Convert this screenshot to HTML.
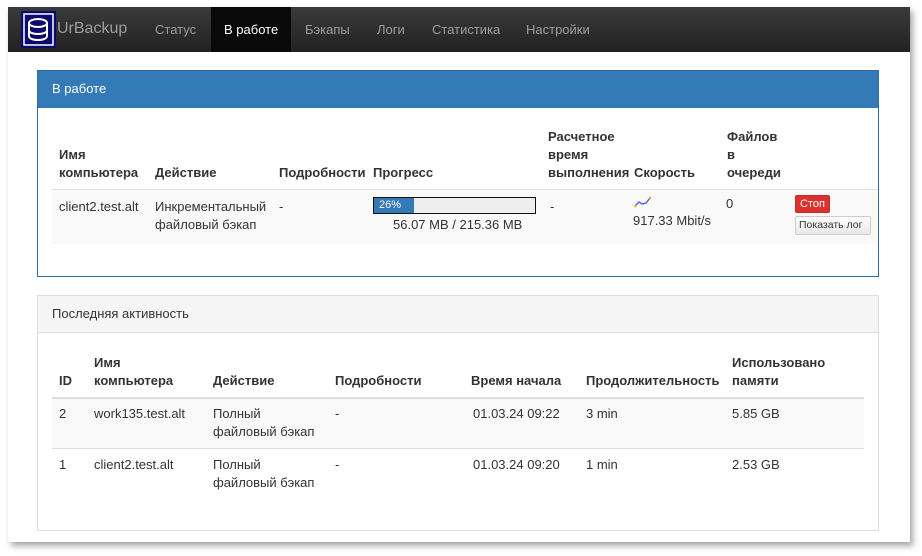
<!DOCTYPE html>
<html><head><meta charset="utf-8"><style>
*{margin:0;padding:0;box-sizing:border-box}
body{width:922px;height:556px;background:#fff;font-family:"Liberation Sans",Arial,sans-serif;font-size:13px;color:#333;position:relative;overflow:hidden}
.frame{position:absolute;left:8px;top:7px;width:902px;height:535px;background:#fff;box-shadow:3px 4px 6px rgba(0,0,0,.35)}
.nav{position:absolute;left:8px;top:7px;width:902px;height:45px;background:linear-gradient(#3a3a3a,#222)}
.nav span{position:absolute;top:15px;color:#9d9d9d;font-size:13px}
.act{position:absolute;left:203px;top:0;width:80px;height:45px;background:#090909}
.a{position:absolute;white-space:nowrap;line-height:18px}
.b{font-weight:bold}
.p1{position:absolute;left:37px;top:70px;width:842px;height:207px;border:1px solid #2e6da4}
.p1h{position:absolute;left:0;top:0;width:840px;height:37px;background:#337ab7;color:#fff;padding:10px 14px}
.p2{position:absolute;left:37px;top:295px;width:842px;height:236px;border:1px solid #ddd}
.p2h{position:absolute;left:0;top:0;width:840px;height:37px;background:#f5f5f5;border-bottom:1px solid #ddd;padding:10px 14px}
.line{position:absolute;height:1px;background:#ddd}
.stripe{position:absolute;background:#f9f9f9}
</style></head><body>
<div class="frame"></div>
<div class="nav">
 <svg style="position:absolute;left:13px;top:4px" width="35" height="37" viewBox="0 0 35 37"><rect width="35" height="37" fill="#0a0a70"/><rect x="3" y="3" width="29" height="31" fill="none" stroke="#fff" stroke-width="1.5"/><ellipse cx="17" cy="12" rx="9" ry="4" fill="none" stroke="#fff" stroke-width="2"/><path d="M8 12v13c0 2.5 4 4 9 4s9-1.5 9-4V12M8 19c0 2.5 4 4 9 4s9-1.5 9-4" fill="none" stroke="#fff" stroke-width="2"/></svg>
 <span style="left:49px;top:13px;font-size:16px;color:#9d9d9d">UrBackup</span>
 <div class="act"></div>
 <span style="left:147px">Статус</span>
 <span style="left:216px;color:#fff">В работе</span>
 <span style="left:297px">Бэкапы</span>
 <span style="left:369px">Логи</span>
 <span style="left:424px">Статистика</span>
 <span style="left:518px">Настройки</span>
</div>
<div class="p1"><div class="p1h">В работе</div></div>
<div class="stripe" style="left:52px;top:190px;width:825px;height:54px"></div>
<div class="line" style="left:52px;top:189px;width:825px;height:1px;background:#ddd"></div>
<div class="a b" style="left:59px;top:146px">Имя<br>компьютера</div>
<div class="a b" style="left:155px;top:164px">Действие</div>
<div class="a b" style="left:279px;top:164px">Подробности</div>
<div class="a b" style="left:373px;top:164px">Прогресс</div>
<div class="a b" style="left:548px;top:128px">Расчетное<br>время<br>выполнения</div>
<div class="a b" style="left:634px;top:164px">Скорость</div>
<div class="a b" style="left:727px;top:128px">Файлов<br>в<br>очереди</div>
<div class="a" style="left:59px;top:198px">client2.test.alt</div>
<div class="a" style="left:155px;top:198px">Инкрементальный<br>файловый бэкап</div>
<div class="a" style="left:279px;top:198px">-</div>
<div style="position:absolute;left:373px;top:197px;width:163px;height:17px;border:1px solid #111;background:#eee"><div style="width:40px;height:15px;background:#337ab7;color:#fff;font-size:11px;padding:1px 5px">26%</div></div>
<div class="a" style="left:393px;top:216px">56.07 MB / 215.36 MB</div>
<div class="a" style="left:550px;top:198px">-</div>
<svg style="position:absolute;left:634px;top:196px" width="18" height="12"><path d="M1 10 L5 6 L8 8 L12 7 L16 2" fill="none" stroke="#55e" stroke-width="1.3"/><circle cx="1.5" cy="10" r="1.2" fill="#f90"/><circle cx="16" cy="2" r="1.2" fill="#f90"/></svg>
<div class="a" style="left:633px;top:212px">917.33 Mbit/s</div>
<div class="a" style="left:726px;top:195px">0</div>
<div style="position:absolute;left:795px;top:195px;width:35px;height:18px;background:#d9322f;border:1px solid #c12e2a;color:#fff;font-size:11px;line-height:14px;padding:1px 4px;border-radius:2px">Стоп</div>
<div style="position:absolute;left:795px;top:216px;width:76px;height:19px;background:linear-gradient(#fff,#e8e8e8);border:1px solid #ccc;font-size:10.5px;line-height:15px;padding:1px 3px;border-radius:2px;white-space:nowrap;overflow:hidden">Показать лог</div>

<div class="p2"><div class="p2h">Последняя активность</div></div>
<div class="stripe" style="left:52px;top:398px;width:812px;height:50px"></div>
<div class="line" style="left:52px;top:397px;width:812px;height:2px"></div>
<div class="line" style="left:52px;top:448px;width:812px"></div>
<div class="a b" style="left:59px;top:372px">ID</div>
<div class="a b" style="left:94px;top:354px">Имя<br>компьютера</div>
<div class="a b" style="left:213px;top:372px">Действие</div>
<div class="a b" style="left:335px;top:372px">Подробности</div>
<div class="a b" style="left:471px;top:372px">Время начала</div>
<div class="a b" style="left:586px;top:372px">Продолжительность</div>
<div class="a b" style="left:732px;top:354px">Использовано<br>памяти</div>
<div class="a" style="left:59px;top:405px">2</div>
<div class="a" style="left:94px;top:405px">work135.test.alt</div>
<div class="a" style="left:213px;top:405px">Полный<br>файловый бэкап</div>
<div class="a" style="left:335px;top:405px">-</div>
<div class="a" style="left:473px;top:405px">01.03.24 09:22</div>
<div class="a" style="left:586px;top:405px">3 min</div>
<div class="a" style="left:732px;top:405px">5.85 GB</div>
<div class="a" style="left:59px;top:456px">1</div>
<div class="a" style="left:94px;top:456px">client2.test.alt</div>
<div class="a" style="left:213px;top:456px">Полный<br>файловый бэкап</div>
<div class="a" style="left:335px;top:456px">-</div>
<div class="a" style="left:473px;top:456px">01.03.24 09:20</div>
<div class="a" style="left:586px;top:456px">1 min</div>
<div class="a" style="left:732px;top:456px">2.53 GB</div>
</body></html>
